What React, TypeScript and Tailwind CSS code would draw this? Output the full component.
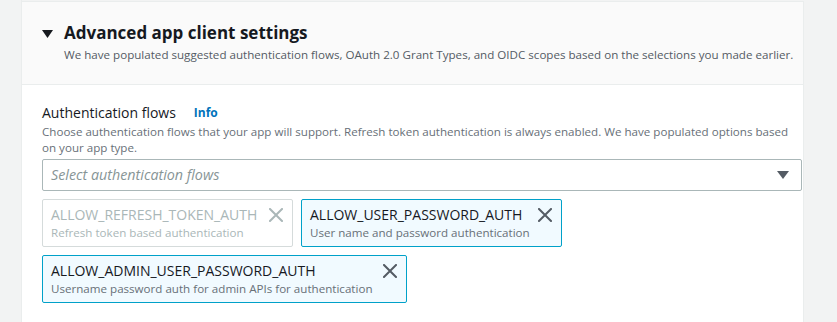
type Flow = {
  name: string;
  description: string;
  disabled?: boolean;
  width: string;
};

const FLOWS: Flow[][] = [
  [
    {
      name: "ALLOW_REFRESH_TOKEN_AUTH",
      description: "Refresh token based authentication",
      disabled: true,
      width: "w-[251px]",
    },
    {
      name: "ALLOW_USER_PASSWORD_AUTH",
      description: "User name and password authentication",
      width: "w-[261px]",
    },
  ],
  [
    {
      name: "ALLOW_ADMIN_USER_PASSWORD_AUTH",
      description: "Username password auth for admin APIs for authentication",
      width: "w-[365px]",
    },
  ],
];

function CloseIcon({ color }: { color: string }) {
  return (
    <svg width="14" height="14" viewBox="0 0 14 14" className="mt-[3px] shrink-0">
      <path d="M1 1L13 13M13 1L1 13" stroke={color} strokeWidth="2" strokeLinecap="square" />
    </svg>
  );
}

function Token({ flow }: { flow: Flow }) {
  return (
    <div
      className={`${flow.width} h-[48px] rounded-[2px] border pl-[8px] pr-[9px] pt-[5px] ${
        flow.disabled ? "border-[#d5dbdb] bg-white" : "border-[#00a1c9] bg-[#f1faff]"
      }`}
    >
      <div className="flex items-start justify-between">
        <div className="whitespace-nowrap">
          <div
            className={`text-[14px] leading-[20px] ${
              flow.disabled ? "text-[#aab7b8]" : "text-[#16191f]"
            }`}
          >
            {flow.name}
          </div>
          <div
            className={`text-[11.6px] leading-[16px] ${
              flow.disabled ? "text-[#aab7b8]" : "text-[#687078]"
            }`}
          >
            {flow.description}
          </div>
        </div>
        <CloseIcon color={flow.disabled ? "#aab7b8" : "#545b64"} />
      </div>
    </div>
  );
}

export default function App() {
  return (
    <div className="flex h-[322px] w-[837px] bg-[#f2f3f3] font-['Open_Sans',sans-serif]">
      <div className="w-[22px] shrink-0 border-r border-[#eaeded]" />
      <div className="mt-[1px] w-[782px] shrink-0 border-t border-r border-[#eaeded] bg-white">
        <div className="h-[83px] border-b border-[#eaeded] bg-[#fafafa] pl-[20px] pt-[19px]">
          <div className="flex items-center gap-[11px]">
            <svg width="11" height="8" viewBox="0 0 11 8" className="mt-[1px]">
              <path d="M0 0h11L5.5 8z" fill="#16191f" />
            </svg>
            <h2 className="text-[17px] font-bold leading-[24px] text-[#16191f]">
              Advanced app client settings
            </h2>
          </div>
          <p className="mt-[2px] whitespace-nowrap pl-[22px] text-[11.6px] leading-[16px] text-[#545b64]">
            We have populated suggested authentication flows, OAuth 2.0 Grant Types, and OIDC
            scopes based on the selections you made earlier.
          </p>
        </div>

        <div className="pl-[20px] pr-[20px] pt-[18px]">
          <div className="flex items-center gap-[18px]">
            <span className="text-[14px] leading-[20px] text-[#16191f]">
              Authentication flows
            </span>
            <span className="text-[12px] font-bold leading-[20px] text-[#0073bb]">Info</span>
          </div>
          <p className="mt-[1px] whitespace-nowrap text-[11.6px] leading-[16px] text-[#687078]">
            Choose authentication flows that your app will support. Refresh token authentication is
            always enabled. We have populated options based
            <br />
            on your app type.
          </p>

          <div className="mt-[3px] flex h-[32px] w-[760px] items-center justify-between rounded-[2px] border border-[#aab7b8] bg-white pl-[8px] pr-[12px]">
            <span className="text-[14.3px] italic text-[#879596]">Select authentication flows</span>
            <svg width="12" height="8" viewBox="0 0 12 8">
              <path d="M0 0h12L6 8z" fill="#545b64" />
            </svg>
          </div>

          <div className="mt-[8px] flex flex-col gap-[8px]">
            {FLOWS.map((row, i) => (
              <div key={i} className="flex gap-[8px]">
                {row.map((flow) => (
                  <Token key={flow.name} flow={flow} />
                ))}
              </div>
            ))}
          </div>
        </div>
      </div>
      <div className="flex-1" />
    </div>
  );
}
